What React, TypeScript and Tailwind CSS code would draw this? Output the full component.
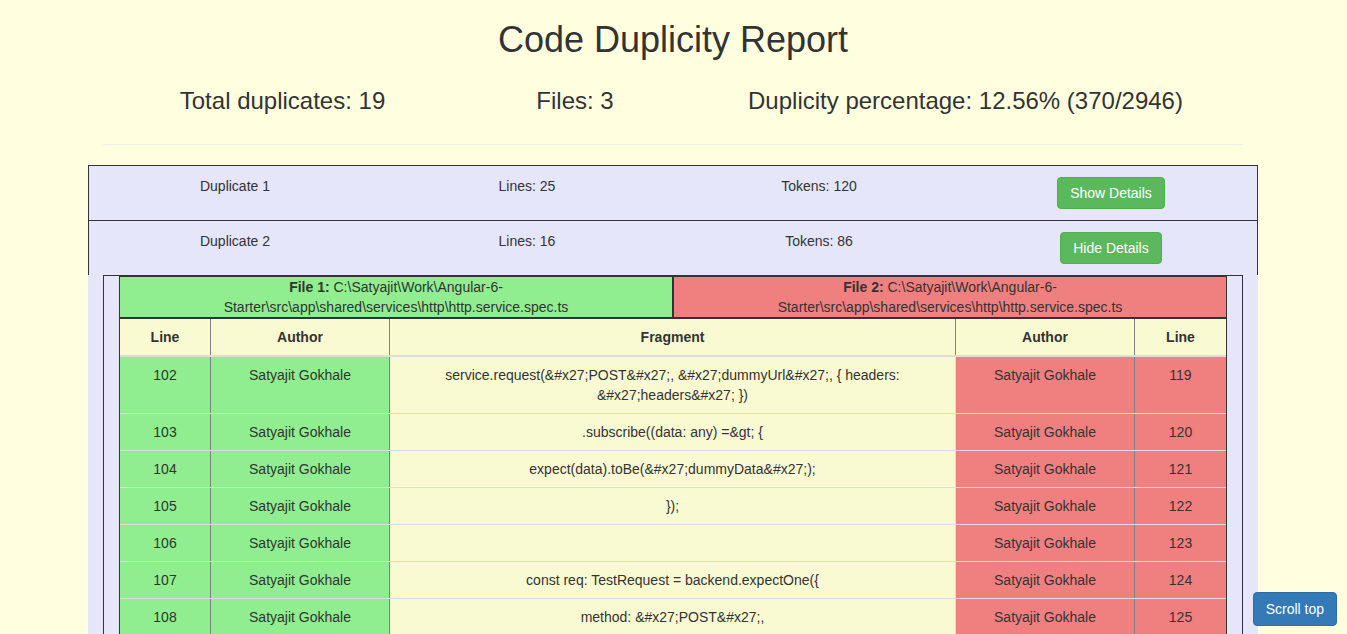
import React from "react";

type Dup = { id: number; lines: number; tokens: number };

const duplicates: Dup[] = [
  { id: 1, lines: 25, tokens: 120 },
  { id: 2, lines: 16, tokens: 86 },
  { id: 3, lines: 14, tokens: 80 },
  { id: 4, lines: 12, tokens: 74 },
  { id: 5, lines: 22, tokens: 102 },
  { id: 6, lines: 18, tokens: 96 },
];

// [file1 line, fragment, file2 line]
const fragmentRows: [number, string, number][] = [
  [102, "service.request(&#x27;POST&#x27;, &#x27;dummyUrl&#x27;, { headers: &#x27;headers&#x27; })", 119],
  [103, ".subscribe((data: any) =&gt; {", 120],
  [104, "expect(data).toBe(&#x27;dummyData&#x27;);", 121],
  [105, "});", 122],
  [106, "", 123],
  [107, "const req: TestRequest = backend.expectOne({", 124],
  [108, "method: &#x27;POST&#x27;,", 125],
  [109, "url: &#x27;dummyUrl&#x27;", 126],
  [110, "});", 127],
  [111, "", 128],
  [112, "expect(req.request.headers.get(&#x27;headers&#x27;)).toBe(&#x27;headers&#x27;);", 129],
  [113, "req.flush(&#x27;dummyData&#x27;);", 130],
  [114, "backend.verify();", 131],
  [115, "}));", 132],
  [116, "", 133],
  [117, "it(&#x27;should handle errors&#x27;, inject([HttpTestingController], (backend: HttpTestingController) =&gt; {", 134],
];

const DupRow = ({ dup, open, last }: { dup: Dup; open: boolean; last?: boolean }) => (
  <div
    className={
      "grid grid-cols-4 border-x border-[#333] text-center " +
      (open || last ? "" : "border-b")
    }
  >
    <div className="pt-[10px] leading-[20px]">Duplicate {dup.id}</div>
    <div className="pt-[10px] leading-[20px]">Lines: {dup.lines}</div>
    <div className="pt-[10px] leading-[20px]">Tokens: {dup.tokens}</div>
    <div className="pt-[11px] pb-[11px]">
      <button className="h-[32px] rounded-[4px] border border-[#4cae4c] bg-[#5cb85c] px-[12px] leading-[20px] text-white">
        {open ? "Hide Details" : "Show Details"}
      </button>
    </div>
  </div>
);

const Details = () => (
  <div className="px-[15px]">
    <div className="border border-[#333] px-[15px] pb-[20px]">
      <div className="border border-[#333] text-center">
        {/* file headers */}
        <div className="grid grid-cols-[554px_1fr] border-b-2 border-[#333] leading-[20px]">
          <div className="border-r-2 border-[#333] bg-[#90ee90] px-[8px]">
            <div>
              <b>File 1:</b> C:\Satyajit\Work\Angular-6-
            </div>
            <div>Starter\src\app\shared\services\http\http.service.spec.ts</div>
          </div>
          <div className="bg-[#f08080] px-[8px]">
            <div>
              <b>File 2:</b> C:\Satyajit\Work\Angular-6-
            </div>
            <div>Starter\src\app\shared\services\http\http.service.spec.ts</div>
          </div>
        </div>

        {/* column headers */}
        <div className="grid grid-cols-[91px_179px_566px_179px_1fr] border-b-2 border-[#ddd] bg-[#fafad2] font-bold leading-[20px]">
          <div className="border-r border-[#808080] p-[8px]">Line</div>
          <div className="border-r border-[#808080] p-[8px]">Author</div>
          <div className="border-r border-[#808080] p-[8px]">Fragment</div>
          <div className="border-r border-[#808080] p-[8px]">Author</div>
          <div className="p-[8px]">Line</div>
        </div>

        {fragmentRows.map(([a, frag, b], i) => (
          <div
            key={a}
            className={
              "grid grid-cols-[91px_179px_566px_179px_1fr] leading-[20px] " +
              (i === 0 ? "" : "border-t border-[#ddd]")
            }
          >
            <div className="border-r border-[#808080] bg-[#90ee90] p-[8px]">{a}</div>
            <div className="border-r border-[#808080] bg-[#90ee90] p-[8px]">Satyajit Gokhale</div>
            <div className="border-r border-[#ddd] bg-[#fafad2] p-[8px]">{frag}</div>
            <div className="border-r border-[#808080] bg-[#f08080] p-[8px]">Satyajit Gokhale</div>
            <div className="bg-[#f08080] p-[8px]">{b}</div>
          </div>
        ))}
      </div>
    </div>
  </div>
);

export default function App() {
  return (
    <div className="min-h-screen bg-[#ffffe0] pt-[20px] pb-[40px] font-['Liberation_Sans',Arial,sans-serif] text-[14px] text-[#333]">
      <div className="ml-[88px] w-[1170px]">
        <h1 className="text-center text-[36px] leading-[1.1]">Code Duplicity Report</h1>

        <div className="mx-[15px] mt-[28px] grid grid-cols-[359px_226px_1fr] text-center text-[24px] leading-[1.1]">
          <div>Total duplicates: 19</div>
          <div>Files: 3</div>
          <div>Duplicity percentage: 12.56% (370/2946)</div>
        </div>

        <div className="mx-[15px] mt-[30px] mb-[20px] border-t border-[#eee]" />

        <div className="bg-[#e6e6fa]">
          <div className="border-t border-[#333]">
            <DupRow dup={duplicates[0]} open={false} />
            <DupRow dup={duplicates[1]} open={true} />
          </div>
          <Details />
          <div className="border-t border-[#333]">
            {duplicates.slice(2).map((d, i, arr) => (
              <DupRow key={d.id} dup={d} open={false} last={i === arr.length - 1} />
            ))}
          </div>
          <div className="border-t border-[#333]" />
        </div>
      </div>

      <button className="fixed bottom-[8px] right-[10px] h-[34px] rounded-[4px] border border-[#2e6da4] bg-[#337ab7] px-[12px] leading-[20px] text-white">
        Scroll top
      </button>
    </div>
  );
}
